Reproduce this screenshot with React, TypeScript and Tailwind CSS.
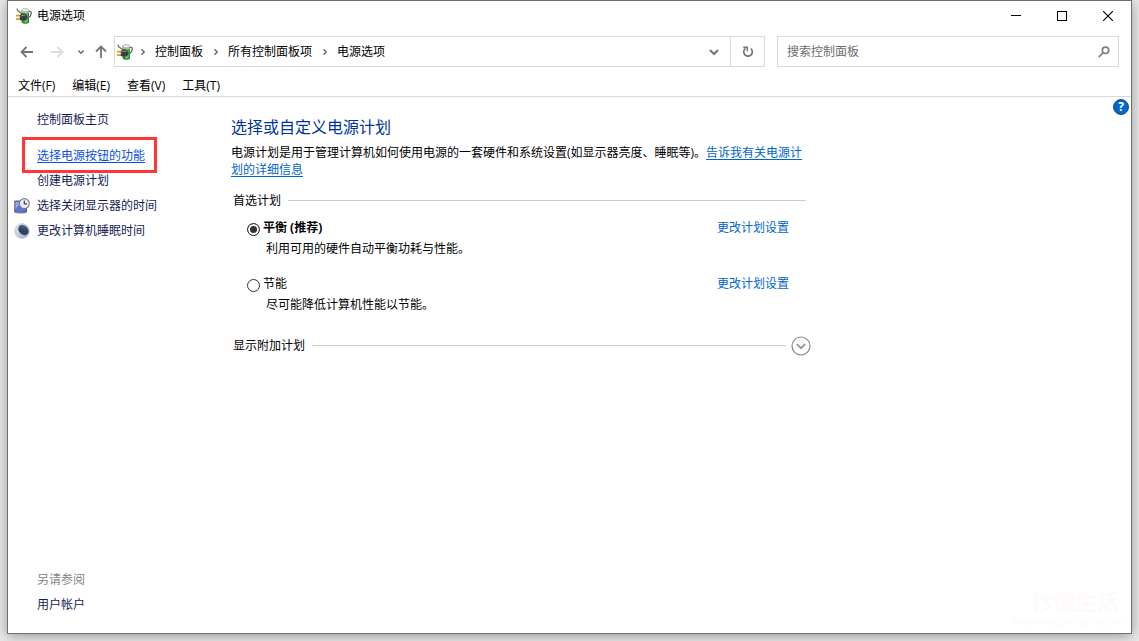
import { ReactNode, useState } from "react";

// ----------------------
// DATA
// ----------------------
const menuItems = ["文件(F)", "编辑(E)", "查看(V)", "工具(T)"];

const breadcrumbs = ["控制面板", "所有控制面板项", "电源选项"];

const plans = [
  {
    id: "balanced",
    name: "平衡 (推荐)",
    description: "利用可用的硬件自动平衡功耗与性能。",
  },
  {
    id: "saver",
    name: "节能",
    description: "尽可能降低计算机性能以节能。",
  },
];

// ----------------------
// ICONS
// ----------------------
function PowerIcon() {
  return (
    <svg viewBox="0 0 16 16" className="size-4 shrink-0" aria-hidden="true">
      <defs>
        <linearGradient id="cell" x1="0" x2="1" y1="0" y2="0">
          <stop offset="0" stopColor="#1f7a2c" />
          <stop offset="0.6" stopColor="#62d866" />
          <stop offset="1" stopColor="#1f8a2c" />
        </linearGradient>
      </defs>
      <path
        d="M12.800 3.500c1.800-.7 2.700.4 2.400 2.200-.3 1.500-1 2.700-2 3.700"
        fill="none"
        stroke="#55595a"
        strokeWidth="1.200"
      />
      <path d="M5.500 2.500h7.500v11.500c-1.200 1.700-6.300 1.700-7.500 0z" fill="url(#cell)" />
      <path d="M5.500 2.500h7.500v2.200c-1.500.8-6 .8-7.500 0z" fill="#a9bfa9" />
      <ellipse cx="9.200" cy="2.200" rx="3.500" ry="1.700" fill="#e9efe8" stroke="#7c887c" strokeWidth="0.500" />
      <path d="M6 14.300c1.500 1.300 5.500 1.300 7-.2" fill="none" stroke="#1d5c27" strokeWidth="0.900" />
      <path d="M1 .5c.1 1.700.9 2.700 2.400 3.400l2.400 1.800" fill="none" stroke="#62676a" strokeWidth="1.200" />
      <path d="M0 7.700h4M0 11.200h4" stroke="#dda20c" strokeWidth="1.700" />
      <path d="M3.800 7 6.500 5.500c2.900-.5 4.900 1.300 4.900 3.700 0 2.300-2 3.700-4.900 3.400L3.800 12z" fill="#3b3e41" />
      <path d="M4.500 8.200c1.600-1 3.400-1.200 5-.5" fill="none" stroke="#8f9497" strokeWidth="1" />
    </svg>
  );
}

function DisplayClockIcon() {
  return (
    <svg viewBox="0 0 16 16" className="size-4" aria-hidden="true">
      <path d="M.8 3h11.700v11.200H.8z" fill="#5577e0" stroke="#555a70" />
      <path d="M1.500 4h6l-6 7z" fill="#8ea8f2" />
      <path d="M3 14.800h8" stroke="#777c8c" strokeWidth="1.200" />
      <circle cx="10.300" cy="5.600" r="5" fill="#e9edf2" stroke="#7a7f87" strokeWidth="1.200" />
      <path d="M10.300 2.500v3.400h2.700" fill="none" stroke="#3f454d" strokeWidth="1.200" />
    </svg>
  );
}

function MoonIcon() {
  return (
    <svg viewBox="0 0 16 16" className="size-4" aria-hidden="true">
      <defs>
        <linearGradient id="moon" x1="0" x2="1" y1="0" y2="1">
          <stop offset="0" stopColor="#dfe8f2" />
          <stop offset="0.6" stopColor="#b9c8d8" />
          <stop offset="1" stopColor="#8fa3b8" />
        </linearGradient>
        <linearGradient id="night" x1="0" x2="1" y1="0" y2="1">
          <stop offset="0" stopColor="#5d7299" />
          <stop offset="0.6" stopColor="#2c3a55" />
          <stop offset="1" stopColor="#3f5273" />
        </linearGradient>
      </defs>
      <circle cx="8" cy="8" r="7.500" fill="url(#moon)" stroke="#c3ccd5" strokeWidth="0.600" />
      <ellipse cx="9.400" cy="7" rx="5.700" ry="4.500" fill="url(#night)" transform="rotate(48 9.400 7)" />
    </svg>
  );
}

function Chevron({ className = "" }: { className?: string }) {
  return (
    <svg viewBox="0 0 8 8" className={`size-2 shrink-0 ${className}`} aria-hidden="true">
      <path d="M2.500 1.300 5.200 4 2.500 6.700" fill="none" stroke="#6d6d6d" strokeWidth="1.500" />
    </svg>
  );
}

function Arrow({ color, className = "" }: { color: string; className?: string }) {
  return (
    <svg viewBox="0 0 14 14" className={`size-[14px] ${className}`} aria-hidden="true">
      <path d="M13 7H1.800M6.500 2 1.500 7l5 5" fill="none" stroke={color} strokeWidth="1.800" />
    </svg>
  );
}

// ----------------------
// PARTS
// ----------------------
function TitleBar() {
  return (
    <header className="flex h-[30px] items-center pl-2">
      <PowerIcon />
      <h1 className="ml-[5px] flex-1 text-xs">电源选项</h1>
      <button aria-label="最小化" className="flex h-full w-[46px] items-center justify-center">
        <svg viewBox="0 0 10 10" className="size-[10px]" shapeRendering="crispEdges">
          <path d="M0 4.500h10" stroke="#000" />
        </svg>
      </button>
      <button aria-label="最大化" className="flex h-full w-[46px] items-center justify-center">
        <svg viewBox="0 0 10 10" className="size-[10px]" shapeRendering="crispEdges">
          <path d="M.5.5h9v9h-9z" fill="none" stroke="#000" />
        </svg>
      </button>
      <button aria-label="关闭" className="flex h-full w-[46px] items-center justify-center">
        <svg viewBox="0 0 10 10" className="size-[10px]">
          <path d="m0 0 10 10M10 0 0 10" stroke="#000" strokeWidth="1.100" />
        </svg>
      </button>
    </header>
  );
}

function AddressBar() {
  return (
    <div className="flex items-center pt-[5px] pr-3 pl-3">
      <button aria-label="后退">
        <Arrow color="#757575" />
      </button>
      <button aria-label="前进" disabled className="ml-4">
        <Arrow color="#dcdcdc" className="rotate-180" />
      </button>
      <button aria-label="最近的位置" className="ml-[13px]">
        <Chevron className="rotate-90" />
      </button>
      <button aria-label="上移" className="ml-[9px]">
        <Arrow color="#757575" className="rotate-90" />
      </button>

      <div className="ml-[6px] flex h-[31px] flex-1 items-center border border-[#d9d9d9]">
        <nav aria-label="地址" className="flex flex-1 items-center pl-[2px]">
          <PowerIcon />
          {breadcrumbs.map((crumb) => (
            <span key={crumb} className="flex items-center">
              <Chevron className="mr-2 ml-[6px]" />
              <button className="pr-[3px]">{crumb}</button>
            </span>
          ))}
        </nav>
        <button aria-label="展开地址" className="flex w-8 justify-center">
          <svg viewBox="0 0 10 10" className="size-[10px]">
            <path d="M1 3l4 4 4-4" fill="none" stroke="#757575" strokeWidth="2" />
          </svg>
        </button>
        <button aria-label="刷新" className="flex h-full w-[34px] items-center justify-center border-l border-[#d9d9d9]">
          <svg viewBox="0 0 12 12" className="size-3">
            <path d="M8.800 2.600A4.300 4.300 0 1 1 3.500 2.400" fill="none" stroke="#757575" strokeWidth="1.700" />
            <path d="M1.300 1.300h4v4" fill="none" stroke="#757575" strokeWidth="1.500" />
          </svg>
        </button>
      </div>

      <div className="ml-3 flex h-[31px] w-[342px] items-center border border-[#d9d9d9] pr-2 pl-[9px]">
        <input
          type="text"
          aria-label="搜索控制面板"
          placeholder="搜索控制面板"
          className="min-w-0 flex-1 outline-none placeholder:text-[#6d6d6d]"
        />
        <svg viewBox="0 0 12 12" className="size-3" aria-hidden="true">
          <circle cx="7.500" cy="4.300" r="3.200" fill="none" stroke="#808080" strokeWidth="1.700" />
          <path d="M5.200 6.600.7 11.100" stroke="#808080" strokeWidth="1.800" />
        </svg>
      </div>
    </div>
  );
}

function SideLink({
  icon,
  highlighted,
  children,
}: {
  icon?: ReactNode;
  highlighted?: boolean;
  children: ReactNode;
}) {
  return (
    <a href="#" className="flex h-[25px] items-center gap-[7px] pl-[6px]">
      <span className="w-4 shrink-0">{icon}</span>
      {highlighted ? (
        <span className="relative text-[#0a4fe8] underline underline-offset-2">
          {children}
          <span className="absolute -top-[11px] -right-3 -bottom-[9px] -left-[15px] border-3 border-[#ff3636]" />
        </span>
      ) : (
        <span className="text-[#151c55]">{children}</span>
      )}
    </a>
  );
}

function Sidebar() {
  return (
    <aside className="flex w-[223px] shrink-0 flex-col pt-[10px] pb-4">
      <SideLink>控制面板主页</SideLink>
      <nav className="mt-[11px]">
        <SideLink highlighted>选择电源按钮的功能</SideLink>
        <SideLink>创建电源计划</SideLink>
        <SideLink icon={<DisplayClockIcon />}>选择关闭显示器的时间</SideLink>
        <SideLink icon={<MoonIcon />}>更改计算机睡眠时间</SideLink>
      </nav>
      <div className="mt-auto">
        <h2 className="pl-[29px] leading-[25px] text-[#838383]">另请参阅</h2>
        <SideLink>用户帐户</SideLink>
      </div>
    </aside>
  );
}

function PowerPlans() {
  const [selected, setSelected] = useState("balanced");

  return (
    <main className="w-[580px] pt-[18px]">
      <h2 className="text-base leading-6 text-[#003399]">选择或自定义电源计划</h2>
      <p className="mt-[5px] pr-[5px] leading-[17px]">
        电源计划是用于管理计算机如何使用电源的一套硬件和系统设置(如显示器亮度、睡眠等)。
        <a href="#" className="text-[#0066cc] underline underline-offset-2">
          告诉我有关电源计划的详细信息
        </a>
      </p>

      <section role="radiogroup" aria-labelledby="preferred" className="mt-3">
        <div className="flex h-[21px] items-center gap-[7px] pr-[5px] pl-[2px]">
          <h3 id="preferred">首选计划</h3>
          <span className="h-px flex-1 bg-[#cccccc]" />
        </div>
        <div className="mt-[7px] flex flex-col gap-[15px]">
          {plans.map((plan) => (
            <div key={plan.id}>
              <div className="flex h-5 items-center justify-between pr-[22px] pl-4">
                <label className="flex items-center gap-[3px]">
                  <input
                    type="radio"
                    name="plan"
                    checked={selected === plan.id}
                    onChange={() => setSelected(plan.id)}
                    className="mt-[2px] size-[13px] appearance-none rounded-full border border-[#333333] bg-white checked:bg-[#333333] checked:shadow-[inset_0_0_0_2px_white]"
                  />
                  <span className={selected === plan.id ? "font-bold" : ""}>{plan.name}</span>
                </label>
                <a href="#" className="text-[#0066cc]">
                  更改计划设置
                </a>
              </div>
              <p className="pt-px pl-[35px] leading-5">{plan.description}</p>
            </div>
          ))}
        </div>
      </section>

      <div className="mt-5 flex h-[21px] items-center gap-[7px] pl-[2px]">
        <span>显示附加计划</span>
        <span className="h-px flex-1 bg-[#cccccc]" />
        <button aria-label="显示附加计划">
          <svg viewBox="0 0 20 20" className="-ml-[2px] size-5">
            <circle cx="10" cy="10" r="9" fill="none" stroke="#8a8a8a" strokeWidth="1.200" />
            <path d="m5.800 8 4.200 4.200L14.200 8" fill="none" stroke="#9a9a9a" strokeWidth="1.800" />
          </svg>
        </button>
      </div>
    </main>
  );
}

export default function App() {
  return (
    <div className="flex h-screen overflow-hidden bg-[#e9e9e9] px-[7px] pb-[7px] font-['Open_Sans','Noto_Sans_CJK_SC',sans-serif] text-xs text-black">
      <div className="relative flex min-w-0 flex-1 flex-col border border-[#707070] bg-white shadow-[0_2px_12px_rgba(0,0,0,0.35)]">
        <TitleBar />
        <AddressBar />
        <nav className="mt-[9px] box-content flex h-5 items-center gap-[17px] border-b border-[#dadada] pl-[10px]">
          {menuItems.map((item) => (
            <button key={item}>{item}</button>
          ))}
        </nav>

        <div className="flex min-h-0 flex-1">
          <Sidebar />
          <PowerPlans />
          <button
            aria-label="帮助"
            className="mt-[2px] mr-[2px] ml-auto flex size-4 items-center justify-center rounded-full border border-[#12508c] bg-[#0067cc] text-xs leading-none font-bold text-white"
          >
            ?
          </button>
        </div>

        <div className="pointer-events-none absolute right-1 bottom-1 text-right text-[#fefafa]">
          <p className="mr-2 text-[22px] leading-6 font-bold">秒懂生活</p>
          <p className="text-[10px] leading-4">miaodongshenghuo.com</p>
        </div>
      </div>
    </div>
  );
}
